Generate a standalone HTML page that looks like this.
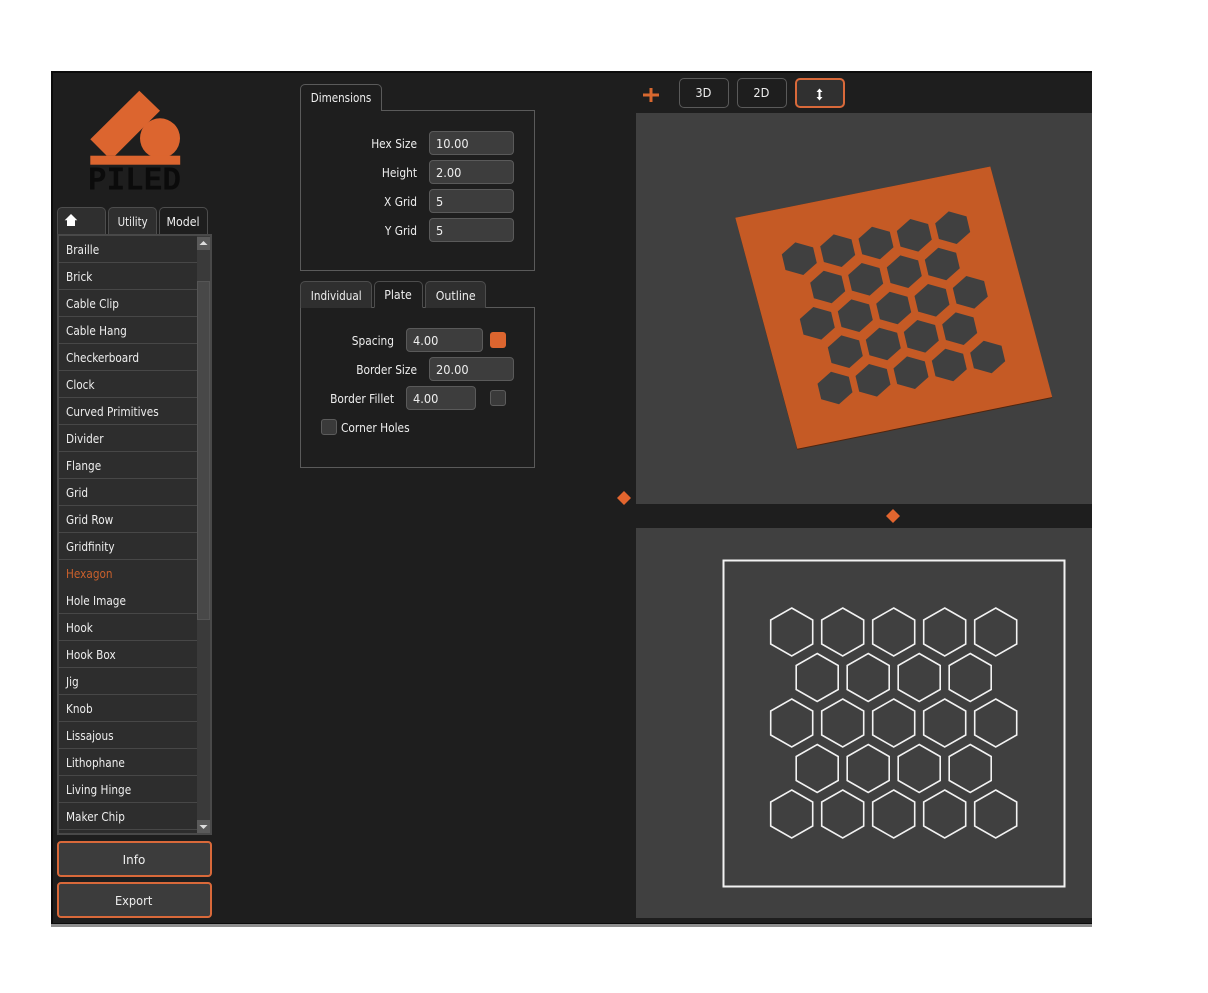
<!DOCTYPE html>
<html><head><meta charset="utf-8"><style>
html,body{margin:0;padding:0;background:#fff}
body{width:1208px;height:993px;position:relative;overflow:hidden;font-family:"DejaVu Sans","Liberation Sans",sans-serif;font-size:12px;color:#eee}
.a{position:absolute;box-sizing:border-box}
.t{position:absolute;white-space:nowrap;line-height:16px;height:16px;transform-origin:0 50%;transform:scaleX(.885)}
.r{text-align:right;transform-origin:100% 50%}
.tab{position:absolute;box-sizing:border-box;border:1px solid #4d4d4d;border-bottom:none;border-radius:5px 5px 0 0;background:#2f2f2f;text-align:center;line-height:28px}
.tab span{display:inline-block;transform:scaleX(.92)}
.tab.on{background:#1e1e1e}
.in{position:absolute;box-sizing:border-box;height:24px;background:#3d3d3d;border:1px solid #5a5a5a;border-radius:4px;padding-left:6px;line-height:24px}
.in span{display:inline-block;transform:scaleX(.95);transform-origin:0 50%}
.btn{position:absolute;box-sizing:border-box;border-radius:4px;text-align:center}
.btn span{display:inline-block;transform:scaleX(.95)}
.li{position:absolute;left:59px;width:138px;height:27px;box-sizing:border-box;border-bottom:1px solid #474747;padding-left:7px;line-height:28px;background:#2d2d2d}
.li span{display:inline-block;transform:scaleX(.875);transform-origin:0 50%}
.cb{position:absolute;box-sizing:border-box;width:16px;height:16px;background:#3a3a3a;border:1px solid #5c5c5c;border-radius:3px}
</style></head><body>
<div class="a" style="left:51px;top:71px;width:1041px;height:852px;background:#1e1e1e;border-top:2px solid #0c0c0c;border-left:2px solid #0c0c0c"></div>
<div class="a" style="left:51px;top:923px;width:1041px;height:1px;background:#0a0a0a"></div>
<div class="a" style="left:51px;top:924px;width:1041px;height:3px;background:#8e8e8e"></div>

<svg class="a" style="left:51px;top:71px" width="140" height="125" viewBox="51 71 140 125">
<polygon points="90.3,139.3 139.3,90.7 160,110.7 115,155.7 106.7,155.7" fill="#dc652f"/>
<circle cx="160" cy="138.3" r="20" fill="#dc652f"/>
<rect x="90.3" y="155.7" width="89.9" height="9" fill="#dc652f"/>
<text x="88" y="189.5" font-family="Liberation Mono,monospace" font-size="33" font-weight="700" fill="#0b0b0b" textLength="93" lengthAdjust="spacingAndGlyphs">PILED</text>
</svg>

<div class="tab" style="left:57px;top:207px;width:49px;height:28px;background:#2f2f2f"></div>
<svg class="a" style="left:64px;top:213px" width="14" height="14" viewBox="0 0 14 14"><path d="M7 1 L13.3 7.2 L11 7.2 L11 13 L3 13 L3 7.2 L.7 7.2 Z" fill="#fff"/></svg>
<div class="tab" style="left:108px;top:207px;width:49px;height:28px"><span style="transform:scaleX(.85)">Utility</span></div>
<div class="tab on" style="left:159px;top:207px;width:49px;height:28px"><span>Model</span></div>

<div class="a" style="left:57px;top:234px;width:155px;height:601px;background:#2d2d2d;border:2px solid #494949;border-right-width:2px"></div>
<div class="li" style="top:236px"><span>Braille</span></div>
<div class="li" style="top:263px"><span>Brick</span></div>
<div class="li" style="top:290px"><span>Cable Clip</span></div>
<div class="li" style="top:317px"><span>Cable Hang</span></div>
<div class="li" style="top:344px"><span>Checkerboard</span></div>
<div class="li" style="top:371px"><span>Clock</span></div>
<div class="li" style="top:398px"><span>Curved Primitives</span></div>
<div class="li" style="top:425px"><span>Divider</span></div>
<div class="li" style="top:452px"><span>Flange</span></div>
<div class="li" style="top:479px"><span>Grid</span></div>
<div class="li" style="top:506px"><span>Grid Row</span></div>
<div class="li" style="top:533px"><span>Gridfinity</span></div>
<div class="li" style="top:560px;color:#c9602c;border-bottom-color:#2d2d2d"><span>Hexagon</span></div>
<div class="li" style="top:587px"><span>Hole Image</span></div>
<div class="li" style="top:614px"><span>Hook</span></div>
<div class="li" style="top:641px"><span>Hook Box</span></div>
<div class="li" style="top:668px"><span>Jig</span></div>
<div class="li" style="top:695px"><span>Knob</span></div>
<div class="li" style="top:722px"><span>Lissajous</span></div>
<div class="li" style="top:749px"><span>Lithophane</span></div>
<div class="li" style="top:776px"><span>Living Hinge</span></div>
<div class="li" style="top:803px"><span>Maker Chip</span></div>
<div class="a" style="left:197px;top:236px;width:13px;height:597px;background:#3a3a3a"></div>
<div class="a" style="left:197px;top:281px;width:13px;height:339px;background:#484848;border:1px solid #555"></div>
<div class="a" style="left:197px;top:237px;width:13px;height:13px;background:#5a5a5a"></div>
<div class="a" style="left:197px;top:820px;width:13px;height:13px;background:#5a5a5a"></div>
<svg class="a" style="left:197px;top:237px" width="13" height="13"><polygon points="2.5,8 10.5,8 6.5,4" fill="#ddd"/></svg>
<svg class="a" style="left:197px;top:820px" width="13" height="13"><polygon points="2.5,5 10.5,5 6.5,9" fill="#ddd"/></svg>

<div class="btn" style="left:57px;top:841px;width:155px;height:36px;background:#3c3c3c;border:2px solid #d9693a;line-height:35px;padding-right:1px"><span style="transform:none">Info</span></div>
<div class="btn" style="left:57px;top:882px;width:155px;height:36px;background:#3c3c3c;border:2px solid #d9693a;line-height:35px;padding-right:2px"><span>Export</span></div>

<div class="a" style="left:300px;top:110px;width:235px;height:161px;border:1px solid #5a5a5a"></div>
<div class="tab on" style="left:300px;top:84px;width:82px;height:27px;border-color:#5a5a5a;line-height:26px"><span style="transform:scaleX(.865)">Dimensions</span></div>
<div class="t r" style="left:320px;width:97px;top:136px">Hex Size</div>
<div class="in" style="left:429px;top:131px;width:85px"><span>10.00</span></div>
<div class="t r" style="left:320px;width:97px;top:165px">Height</div>
<div class="in" style="left:429px;top:160px;width:85px"><span>2.00</span></div>
<div class="t r" style="left:320px;width:97px;top:194px">X Grid</div>
<div class="in" style="left:429px;top:189px;width:85px"><span>5</span></div>
<div class="t r" style="left:320px;width:97px;top:223px">Y Grid</div>
<div class="in" style="left:429px;top:218px;width:85px"><span>5</span></div>

<div class="a" style="left:300px;top:307px;width:235px;height:161px;border:1px solid #5a5a5a"></div>
<div class="tab" style="left:300px;top:281px;width:72px;height:27px"><span style="transform:scaleX(.87)">Individual</span></div>
<div class="tab on" style="left:374px;top:281px;width:49px;height:27px;line-height:27px;border-bottom:1px solid #1e1e1e"><span>Plate</span></div>
<div class="tab" style="left:425px;top:281px;width:61px;height:27px"><span>Outline</span></div>
<div class="t r" style="left:300px;width:94px;top:333px">Spacing</div>
<div class="in" style="left:406px;top:328px;width:77px"><span>4.00</span></div>
<div class="a" style="left:490px;top:332px;width:16px;height:16px;background:#dc652f;border-radius:3px"></div>
<div class="t r" style="left:320px;width:97px;top:362px">Border Size</div>
<div class="in" style="left:429px;top:357px;width:85px"><span>20.00</span></div>
<div class="t r" style="left:300px;width:94px;top:391px">Border Fillet</div>
<div class="in" style="left:406px;top:386px;width:70px"><span>4.00</span></div>
<div class="cb" style="left:490px;top:390px"></div>
<div class="cb" style="left:321px;top:419px"></div>
<div class="t" style="left:341px;top:420px">Corner Holes</div>

<svg class="a" style="left:642px;top:87px" width="18" height="16"><path d="M1 8H17M9 1V15" stroke="#d8682f" stroke-width="3" fill="none"/></svg>
<div class="btn" style="left:679px;top:78px;width:50px;height:30px;border:1px solid #5a5a5a;line-height:29px;border-radius:5px;padding-right:2px"><span>3D</span></div>
<div class="btn" style="left:737px;top:78px;width:50px;height:30px;border:1px solid #5a5a5a;line-height:29px;border-radius:5px;padding-right:2px"><span>2D</span></div>
<div class="btn" style="left:795px;top:78px;width:50px;height:30px;border:2px solid #d9693a;background:#303030;border-radius:5px"></div>
<svg class="a" style="left:814.5px;top:88px" width="9" height="13"><path d="M4.5 0.5L7.5 4H5.5V9H7.5L4.5 12.5L1.5 9H3.5V4H1.5Z" fill="#fff"/></svg>

<div class="a" style="left:636px;top:113px;width:456px;height:391px;background:#404040"></div>
<div class="a" style="left:636px;top:528px;width:456px;height:390px;background:#404040"></div>
<svg class="a" style="left:617px;top:490px" width="14" height="16"><polygon points="7,1 14,8 7,15 0,8" fill="#e2652e"/></svg>
<svg class="a" style="left:886px;top:508px" width="14" height="16"><polygon points="7,1 14,8 7,15 0,8" fill="#e2652e"/></svg>

<svg class="a" style="left:636px;top:113px" width="456" height="391" viewBox="636 113 456 391">
<defs><polygon id="h" points="-4,-16.3 13.8,-11.3 17.5,4.3 4,16.3 -13.8,11.3 -17.5,-4.3" fill="#404040"/></defs>
<polygon points="735.3,217.7 797.3,449.8 1052.2,398 990.3,166.5" fill="#4d2510"/>
<polygon points="735.3,217.7 797.3,448.8 1052.2,397 990.3,166.5" fill="#c55a25"/>
<use href="#h" x="799.3" y="258.7"/><use href="#h" x="837.7" y="250.7"/><use href="#h" x="876" y="243"/><use href="#h" x="914.3" y="235.3"/><use href="#h" x="952.7" y="227.7"/>
<use href="#h" x="827.7" y="287"/><use href="#h" x="865.7" y="279.3"/><use href="#h" x="904.3" y="271.7"/><use href="#h" x="942.3" y="264"/>
<use href="#h" x="817.3" y="323.3"/><use href="#h" x="855.3" y="315.7"/><use href="#h" x="893.7" y="308"/><use href="#h" x="932" y="300.3"/><use href="#h" x="970.3" y="292.3"/>
<use href="#h" x="845.3" y="351.7"/><use href="#h" x="883.3" y="344"/><use href="#h" x="921.3" y="336.3"/><use href="#h" x="959.7" y="328.7"/>
<use href="#h" x="835" y="388"/><use href="#h" x="873" y="380.3"/><use href="#h" x="911" y="372.7"/><use href="#h" x="949.3" y="365"/><use href="#h" x="987.7" y="357"/>
</svg>

<svg class="a" style="left:636px;top:528px" width="456" height="390" viewBox="636 528 456 390">
<defs><polygon id="o" points="0,-24 21,-12 21,12 0,24 -21,12 -21,-12" fill="none" stroke="#f2f2f2" stroke-width="1.6"/></defs>
<rect x="723.5" y="560.5" width="341" height="326" fill="none" stroke="#f2f2f2" stroke-width="2"/>
<use href="#o" x="791.7" y="632"/><use href="#o" x="842.7" y="632"/><use href="#o" x="893.7" y="632"/><use href="#o" x="944.7" y="632"/><use href="#o" x="995.7" y="632"/>
<use href="#o" x="817.2" y="677.5"/><use href="#o" x="868.2" y="677.5"/><use href="#o" x="919.2" y="677.5"/><use href="#o" x="970.2" y="677.5"/>
<use href="#o" x="791.7" y="723"/><use href="#o" x="842.7" y="723"/><use href="#o" x="893.7" y="723"/><use href="#o" x="944.7" y="723"/><use href="#o" x="995.7" y="723"/>
<use href="#o" x="817.2" y="768.5"/><use href="#o" x="868.2" y="768.5"/><use href="#o" x="919.2" y="768.5"/><use href="#o" x="970.2" y="768.5"/>
<use href="#o" x="791.7" y="814"/><use href="#o" x="842.7" y="814"/><use href="#o" x="893.7" y="814"/><use href="#o" x="944.7" y="814"/><use href="#o" x="995.7" y="814"/>
</svg>
</body></html>
